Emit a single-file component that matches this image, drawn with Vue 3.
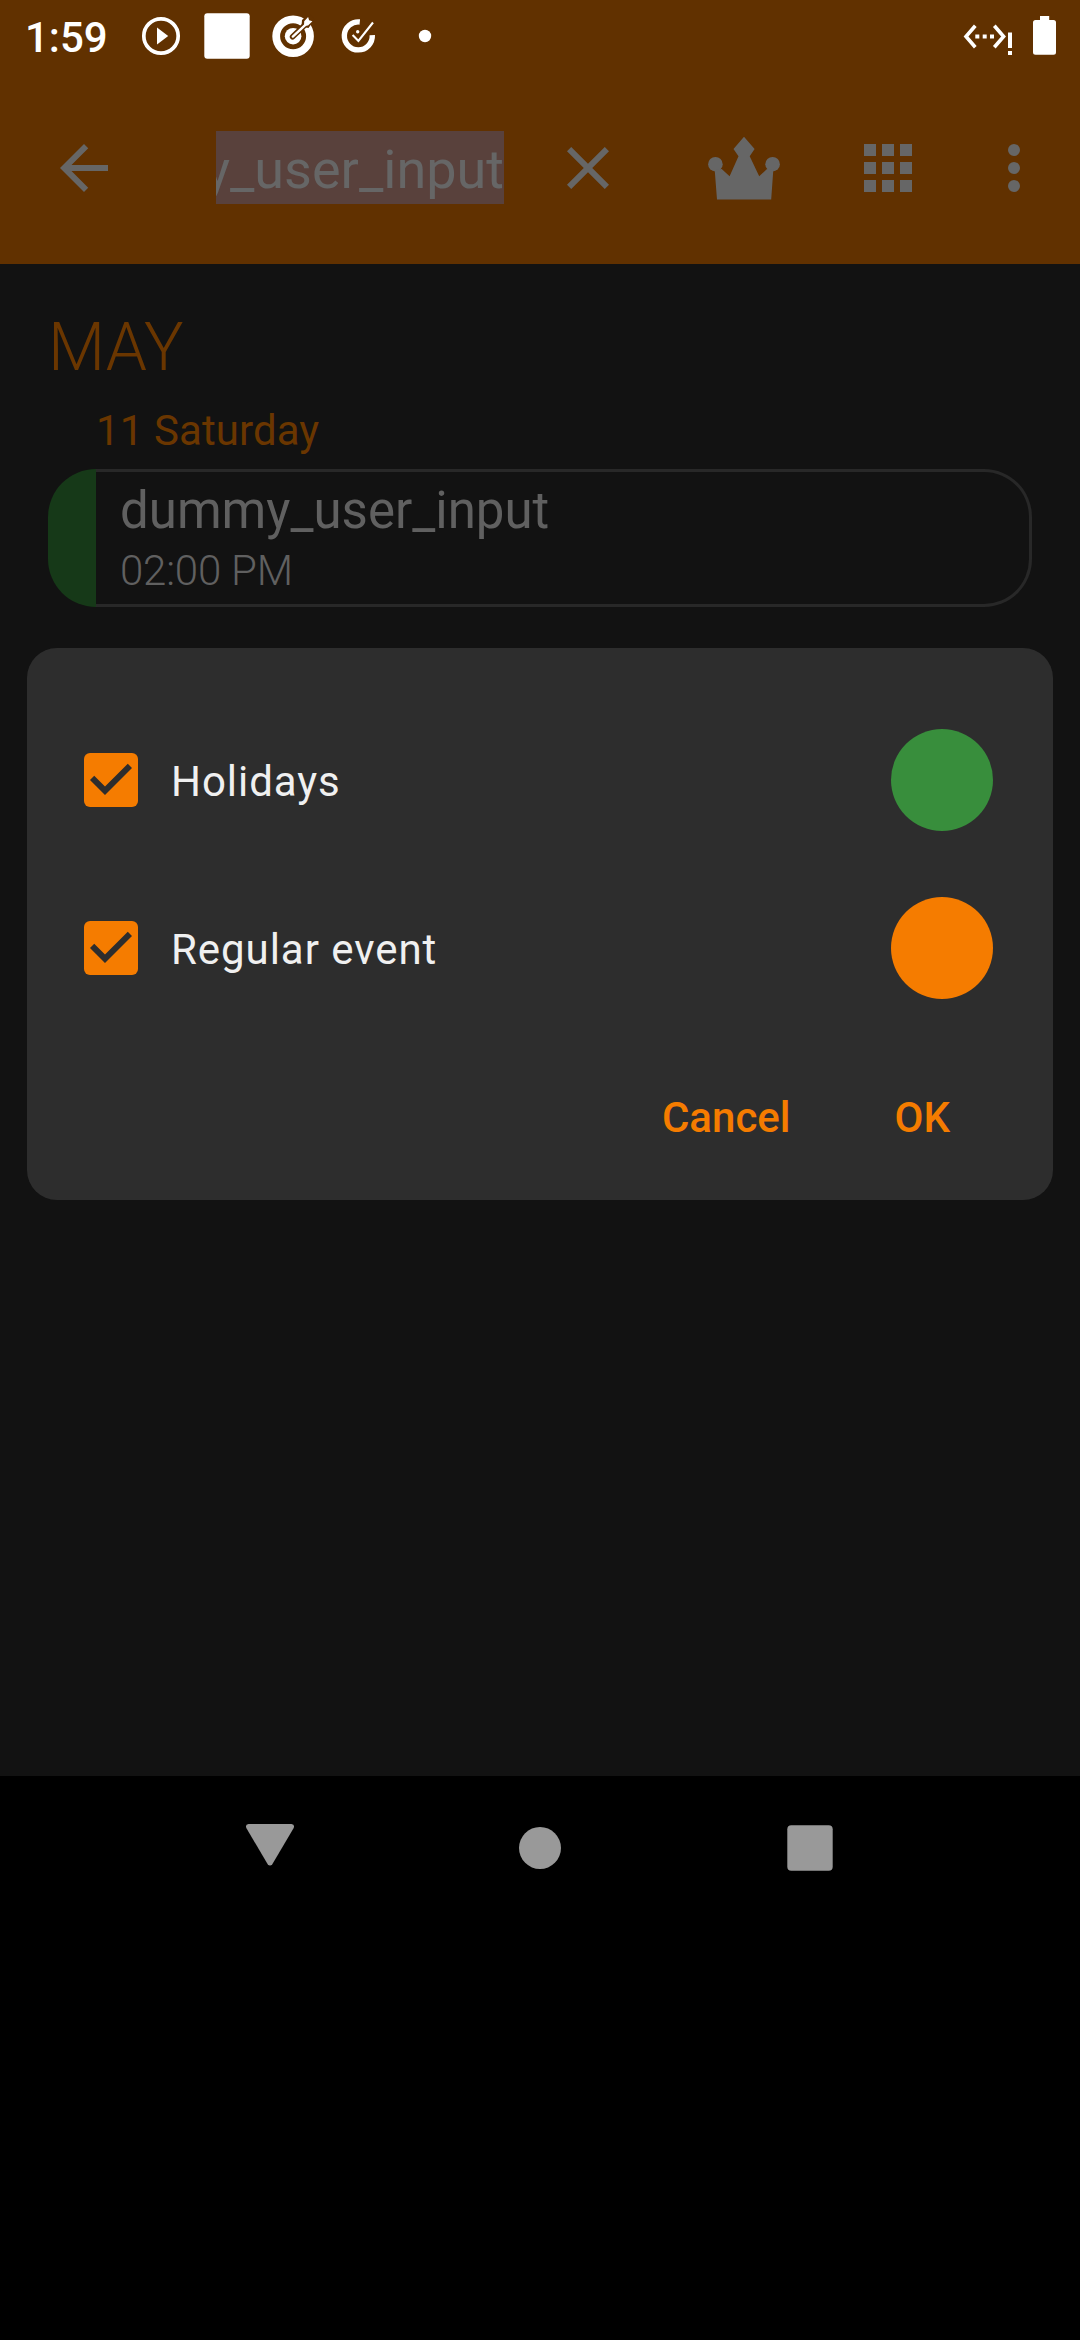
<script setup>
const calendars = [
  { name: 'Holidays', color: '#388e3c' },
  { name: 'Regular event', color: '#f57c00' },
]
const gridCells = [0, 18, 36]
</script>

<template>
  <div class="screen">
    <header class="top">
      <div class="status">
        <span class="clock">1:59</span>
        <svg class="notifications" width="310" height="72" viewBox="130 0 310 72" fill="#fff">
          <circle cx="161" cy="36" r="17.2" fill="none" stroke="#fff" stroke-width="3.7" />
          <path d="M157 27.6v16.8L168.2 36z" />
          <rect x="204.3" y="13.3" width="45.4" height="45.4" rx="3" />
          <circle cx="293.1" cy="36.2" r="16.9" fill="none" stroke="#fff" stroke-width="7.8" />
          <circle cx="293.1" cy="36.2" r="8.3" />
          <path d="M292.6 36.8L306.500 23.500" fill="none" stroke="#613100" stroke-width="5.600" stroke-linecap="round" />
          <path d="M301.500 26.500l.5-6.500 7.500-6.500 5 6-6 8.500z" fill="#613100" />
          <path d="M292.8 36.600L307 23.300" fill="none" stroke="#fff" stroke-width="2.400" stroke-linecap="round" />
          <path d="M304 25.800l.2-4.600 3.900-4.300 1 3.400 3.300.9-4.300 4.400z" />
          <path d="M359.8 22A14 14 0 1 0 372.3 35.200" fill="none" stroke="#fff" stroke-width="5.4" />
          <path d="M352.600 34.900l5.800 6L373 22.500" fill="none" stroke="#fff" stroke-width="2.100" />
          <circle cx="357.700" cy="31.800" r="1.700" />
          <circle cx="425" cy="36" r="6.2" />
        </svg>
        <svg class="system" width="100" height="72" viewBox="960 0 100 72" fill="#fff">
          <path d="M975.3 25.8L966 36.5l9.3 10.7M994.3 25.8l9.3 10.7-9.3 10.7" fill="none" stroke="#fff" stroke-width="3.6" />
          <path d="M975.3 34.5h4v4h-4zM982.7 34.5h4v4h-4zM990 34.5h4v4h-4zM1008 32.5h4v15.5h-4zM1008 51h4v4h-4z" />
          <path d="M1040 16h9.2v4h4.3a2.5 2.5 0 0 1 2.5 2.5v29.8a2.5 2.5 0 0 1-2.5 2.5h-18a2.5 2.5 0 0 1-2.5-2.5V22.5a2.5 2.5 0 0 1 2.5-2.5h4.5z" />
        </svg>
      </div>
      <div class="toolbar">
        <svg class="icon" viewBox="0 0 24 24"><path d="M20 11H7.83l5.59-5.59L12 4l-8 8 8 8 1.41-1.41L7.83 13H20z" /></svg>
        <div class="search"><span class="query">dummy_user_input</span></div>
        <svg class="icon close" viewBox="0 0 24 24"><path d="M19 6.41L17.59 5 12 10.59 6.41 5 5 6.41 10.59 12 5 17.59 6.41 19 12 13.41 17.59 19 19 17.59 13.41 12z" /></svg>
        <svg class="icon crown" viewBox="0 0 72 72">
          <circle cx="7.4" cy="32.2" r="7.3" />
          <circle cx="64.6" cy="32.2" r="7.3" />
          <path d="M36 4.7L46.6 17l-4.9 7.3L51.2 44.3 59 37l6.3 1-2.1 29.6H9L6.7 38l7-1 7.9 7.300L30.5 24.3 25.500 17z" />
        </svg>
        <svg class="icon grid" viewBox="0 0 72 72">
          <template v-for="y in gridCells" :key="y">
            <rect v-for="x in gridCells" :key="x" :x="x + 12" :y="y + 12" width="12" height="12" />
          </template>
        </svg>
        <svg class="icon more" viewBox="0 0 72 72">
          <circle v-for="y in gridCells" :key="y" cx="36" :cy="y + 18" r="6" />
        </svg>
      </div>
    </header>

    <main class="list">
      <h1 class="month">MAY</h1>
      <h2 class="day">11 Saturday</h2>
      <article class="event">
        <div class="stripe"></div>
        <div class="details">
          <div class="title">dummy_user_input</div>
          <div class="time">02:00 PM</div>
        </div>
      </article>
    </main>

    <nav class="nav">
      <svg viewBox="0 0 72 72"><path d="M14.500 12h43q3.500.6 2.200 4L38.300 52.300q-2.300 2.600-4.600 0L12.300 16q-1.300-3.400 2.200-4z" /></svg>
      <svg viewBox="0 0 72 72"><circle cx="36" cy="36" r="21" /></svg>
      <svg viewBox="0 0 72 72"><rect x="13.3" y="13.3" width="45.4" height="45.4" rx="4" /></svg>
    </nav>

    <section class="dialog">
      <label v-for="item in calendars" :key="item.name" class="row">
        <svg class="checkbox" viewBox="3 3 18 18">
          <rect x="3" y="3" width="18" height="18" rx="2" fill="#f57c00" />
          <path d="M10 17l-5-5 1.41-1.41L10 14.17l7.59-7.59L19 8z" fill="#2d2d2d" />
        </svg>
        <span class="name">{{ item.name }}</span>
        <span class="swatch" :style="{ background: item.color }"></span>
      </label>
      <div class="actions">
        <button class="cancel">Cancel</button>
        <button class="ok">OK</button>
      </div>
    </section>
  </div>
</template>

<style>
body {
  background: #000;
}
</style>

<style scoped>
.screen {
  position: relative;
  display: flex;
  flex-direction: column;
  width: 1080px;
  height: 2340px;
  overflow: hidden;
  background: #000;
  font-family: Roboto, sans-serif;
}
.top {
  height: 264px;
  background: #613100;
}
.status {
  display: flex;
  height: 72px;
}
.clock {
  width: 105px;
  padding-left: 25px;
  font-size: 42px;
  font-weight: 500;
  line-height: 76px;
  color: #fff;
}
.system {
  margin-left: 520px;
}
.toolbar {
  display: flex;
  align-items: center;
  height: 192px;
  padding-left: 48px;
}
.icon {
  flex: none;
  width: 72px;
  height: 72px;
  fill: #666;
}
.search {
  display: flex;
  justify-content: flex-end;
  width: 288px;
  height: 73px;
  margin: 0 0 1px 96px;
  overflow: hidden;
  background: #59413c;
}
.query {
  font-size: 54px;
  line-height: 78px;
  color: #666;
}
.close {
  margin-left: 48px;
}
.crown {
  margin-left: 84px;
}
.grid {
  margin-left: 72px;
}
.more {
  margin-left: 54px;
}
.list {
  height: 1512px;
  padding: 45px 48px 0;
  box-sizing: border-box;
  background: #121212;
}
.month,
.day {
  margin: 0;
  color: #6a3600;
}
.month {
  font-size: 66px;
  font-weight: 300;
  line-height: 77px;
}
.day {
  margin: 20px 0 13px 48px;
  font-size: 42px;
  font-weight: 400;
  line-height: 50px;
  letter-spacing: 0.1px;
}
.event {
  display: flex;
  height: 138px;
}
.stripe {
  width: 48px;
  border-radius: 48px 0 0 48px;
  background: #163918;
}
.details {
  flex: 1;
  padding: 9px 0 0 24px;
  border: 3px solid #282828;
  border-left: 0;
  border-radius: 0 48px 48px 0;
}
.title {
  font-size: 51px;
  line-height: 60px;
  color: #606060;
}
.time {
  font-size: 42px;
  font-weight: 300;
  line-height: 60px;
  letter-spacing: -0.2px;
  color: #606060;
}
.nav {
  display: flex;
  justify-content: center;
  gap: 198px;
  padding-top: 36px;
}
.nav svg {
  width: 72px;
  height: 72px;
  fill: #999;
}
.dialog {
  position: absolute;
  top: 648px;
  left: 27px;
  width: 1026px;
  height: 552px;
  padding-top: 48px;
  box-sizing: border-box;
  border-radius: 30px;
  background: #2d2d2d;
}
.row {
  display: flex;
  align-items: center;
  height: 168px;
  padding: 0 60px 0 57px;
}
.checkbox {
  width: 54px;
  height: 54px;
}
.name {
  flex: 1;
  padding: 3px 0 0 33px;
  font-size: 42px;
  letter-spacing: 0.95px;
  color: #f0f0f0;
}
.swatch {
  width: 102px;
  height: 102px;
  border-radius: 50%;
}
.actions {
  display: flex;
  justify-content: flex-end;
  gap: 104px;
  padding: 61px 103px 0 0;
}
button {
  padding: 0;
  border: 0;
  background: none;
  font: 500 42px/50px Roboto, sans-serif;
  color: #f57c00;
}
</style>
